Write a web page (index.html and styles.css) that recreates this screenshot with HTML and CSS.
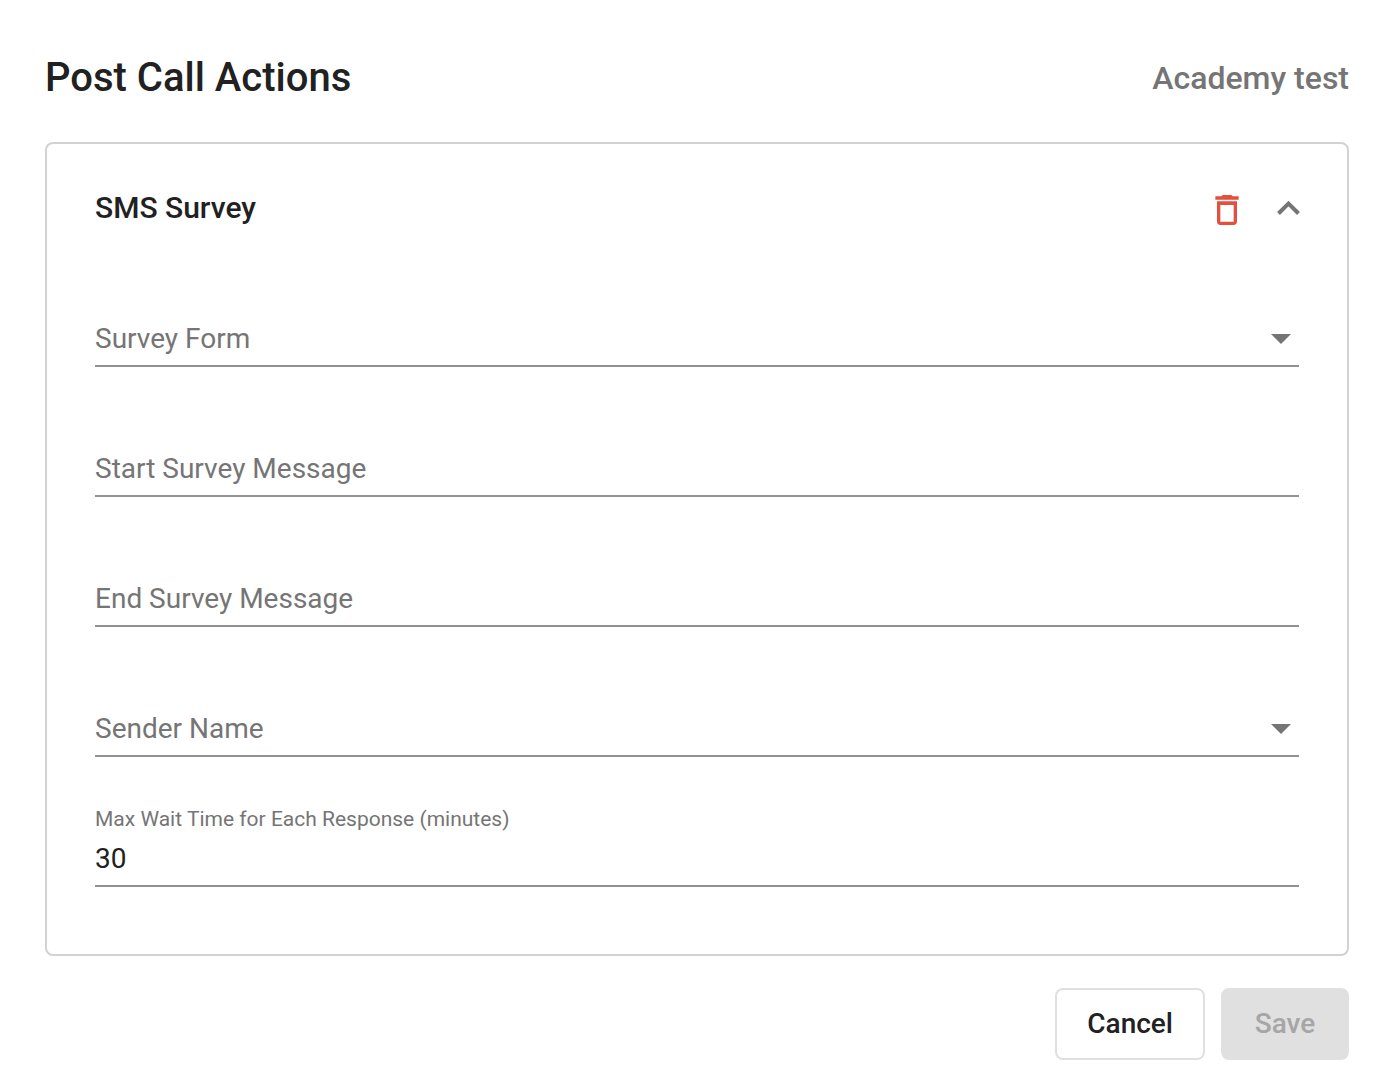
FILE: index.html
```html
<!DOCTYPE html>
<html lang="en">
<head>
<meta charset="UTF-8">
<meta name="viewport" content="width=device-width, initial-scale=1.0">
<title>Post Call Actions</title>
<link rel="stylesheet" href="styles.css">
</head>
<body>

<form class="dialog">
    <header class="dialog-header">
        <h1>Post Call Actions</h1>
        <span class="campaign-name">Academy test</span>
    </header>

    <section class="card">
        <div class="card-header">
            <h2>SMS Survey</h2>
            <div class="card-actions">
                <button type="button" class="icon-button" aria-label="Delete">
                    <svg class="trash-icon" viewBox="0 0 24 24">
                        <path d="M6 19c0 1.1.9 2 2 2h8c1.100 0 2-.9 2-2V6.700H6V19zM8 9h8v10H8V9zM15.500 3.700l-1-.7h-5l-1 .7H5v2.200h14V3.700z"/>
                    </svg>
                </button>
                <button type="button" class="icon-button" aria-label="Collapse">
                    <svg class="chevron-icon" viewBox="0 0 24 16">
                        <path d="M3.500 13.500L13.500 3.500L23.500 13.500"/>
                    </svg>
                </button>
            </div>
        </div>

        <div class="fields">
            <div class="field select-field">
                <label for="surveyForm">Survey Form</label>
                <select id="surveyForm">
                    <option value=""></option>
                </select>
            </div>
            <div class="field">
                <label for="startMessage">Start Survey Message</label>
                <input type="text" id="startMessage">
            </div>
            <div class="field">
                <label for="endMessage">End Survey Message</label>
                <input type="text" id="endMessage">
            </div>
            <div class="field select-field">
                <label for="senderName">Sender Name</label>
                <select id="senderName">
                    <option value=""></option>
                </select>
            </div>
            <div class="field filled">
                <label for="maxWait">Max Wait Time for Each Response (minutes)</label>
                <input type="text" inputmode="numeric" id="maxWait" value="30">
            </div>
        </div>
    </section>

    <footer class="dialog-footer">
        <button type="button" class="button cancel">Cancel</button>
        <button type="submit" class="button save" disabled>Save</button>
    </footer>
</form>

</body>
</html>
```
FILE: styles.css
```css
* {
    box-sizing: border-box;
}

body {
    margin: 0;
    background-color: #fff;
    color: #212121;
    font-family: Roboto, sans-serif;
    font-size: 28px;
}

.dialog {
    padding: 48px 43px 32px 45px;
}

/* Header */
.dialog-header {
    display: flex;
    align-items: center;
    justify-content: space-between;
    height: 60px;
    margin-bottom: 34px;
}

h1,
h2 {
    margin: 0;
    padding-bottom: 2px;
    font-weight: 500;
}

h1 {
    font-size: 40px;
}

h2 {
    font-size: 30px;
}

.campaign-name {
    color: #757575;
    font-size: 32px;
    font-weight: 500;
}

/* Survey card */
.card {
    padding: 40px 48px 67px;
    border: 2px solid #d2d2d2;
    border-radius: 8px;
}

.card-header {
    display: flex;
    align-items: center;
    justify-content: space-between;
    height: 48px;
    margin-bottom: 53px;
}

.card-actions {
    display: flex;
    align-items: center;
    gap: 28px;
}

.icon-button {
    display: flex;
    padding: 0;
    border: none;
    background: none;
    cursor: pointer;
}

.trash-icon {
    width: 40px;
    height: 40px;
    margin-top: 4px;
    fill: #e2503f;
}

.chevron-icon {
    width: 24px;
    height: 16px;
    overflow: visible;
    fill: none;
    stroke: #757575;
    stroke-width: 4;
}

/* Fields */
.fields {
    display: grid;
    gap: 48px;
}

.field {
    display: grid;
    grid-template-rows: 33px 49px;
}

.field label {
    grid-area: 2 / 1;
    z-index: 1;
    color: #757575;
    line-height: 42px;
    pointer-events: none;
}

.field.filled label {
    grid-area: 1 / 1;
    font-size: 21px;
    line-height: 28px;
}

.field input,
.field select {
    grid-area: 2 / 1;
    width: 100%;
    padding: 0 0 7px;
    border: none;
    border-bottom: 2px solid #919191;
    border-radius: 0;
    outline: none;
    background: none;
    color: #212121;
    font: inherit;
    appearance: none;
}

.select-field::after {
    content: "";
    grid-area: 2 / 1;
    justify-self: end;
    width: 20px;
    height: 10px;
    margin: 16px 8px 0 0;
    background-color: #757575;
    clip-path: polygon(0 0, 100% 0, 50% 100%);
    pointer-events: none;
}

/* Footer buttons */
.dialog-footer {
    display: flex;
    justify-content: flex-end;
    gap: 16px;
    margin-top: 32px;
}

.button {
    height: 72px;
    padding: 0 30px 2px;
    border: 2px solid #e0e0e0;
    border-radius: 8px;
    font: inherit;
    font-weight: 500;
    cursor: pointer;
}

.cancel {
    background-color: #fff;
    color: #212121;
}

.save {
    min-width: 128px;
    background-color: #e0e0e0;
    color: #a6a6a6;
    cursor: default;
}
```
